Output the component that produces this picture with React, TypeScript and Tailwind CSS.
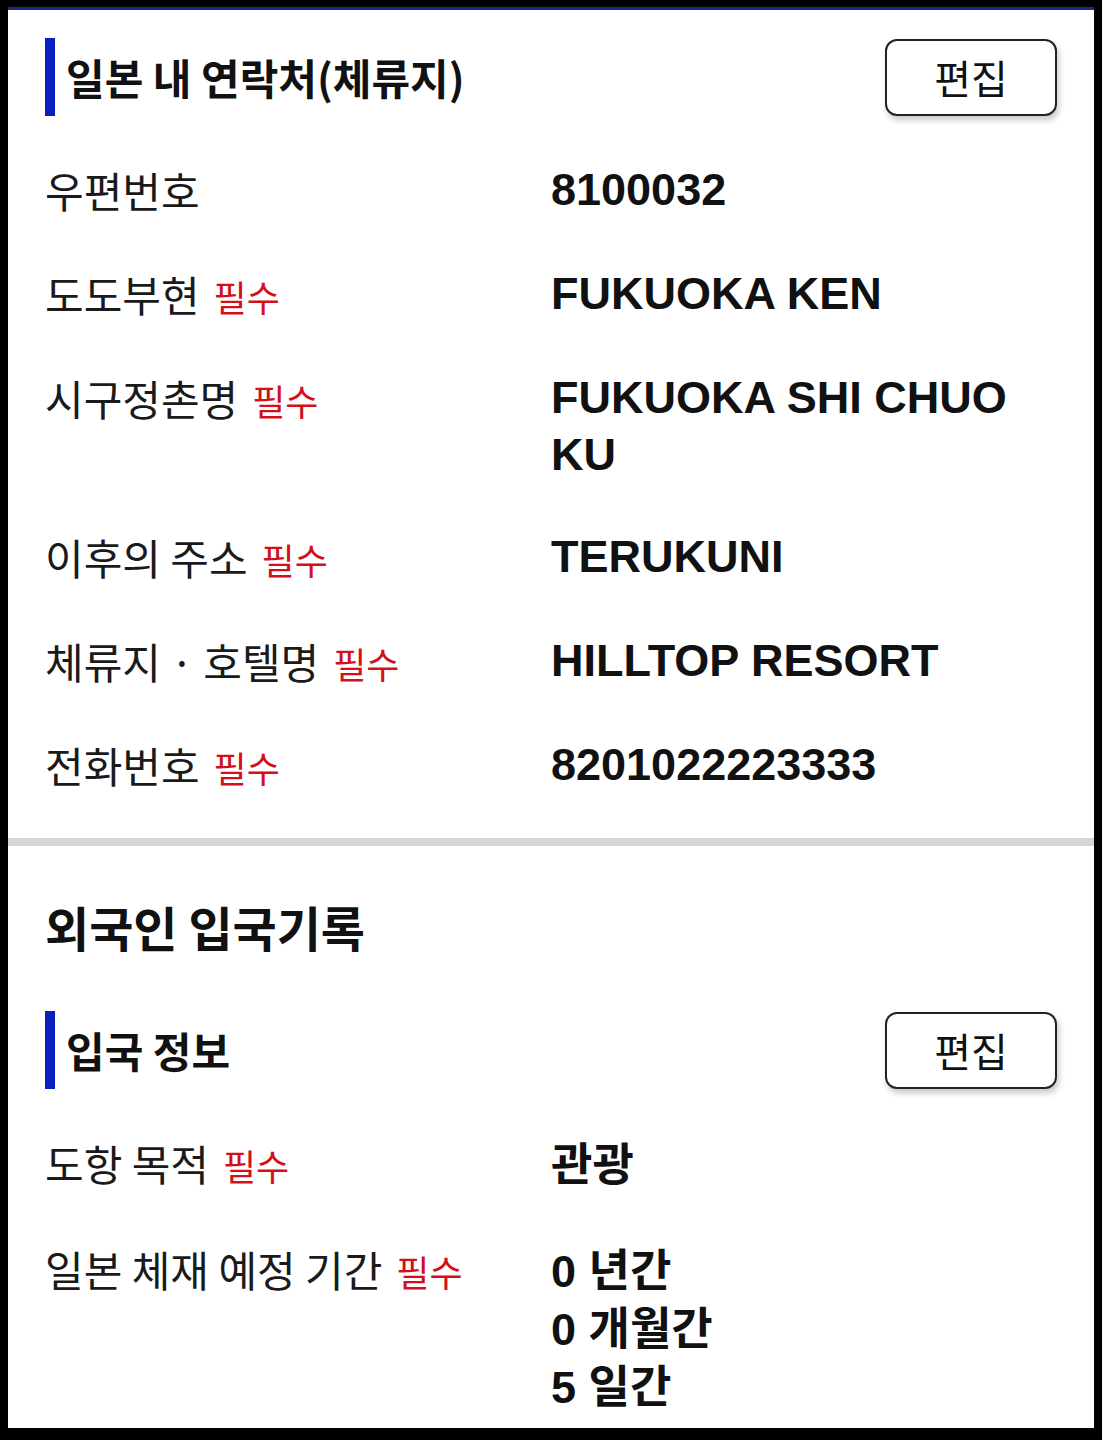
import React from 'react';

type Row = { label: string; required?: boolean; value: string[] };

const contactRows: Row[] = [
  { label: '우편번호', value: ['8100032'] },
  { label: '도도부현', required: true, value: ['FUKUOKA KEN'] },
  { label: '시구정촌명', required: true, value: ['FUKUOKA SHI CHUO KU'] },
  { label: '이후의 주소', required: true, value: ['TERUKUNI'] },
  { label: '체류지 · 호텔명', required: true, value: ['HILLTOP RESORT'] },
  { label: '전화번호', required: true, value: ['8201022223333'] },
];

const entryRows: Row[] = [
  { label: '도항 목적', required: true, value: ['관광'] },
  { label: '일본 체재 예정 기간', required: true, value: ['0 년간', '0 개월간', '5 일간'] },
];

const ko = { fontFamily: '"Noto Sans CJK KR", "Noto Sans", sans-serif' };
const latin = { fontFamily: '"Liberation Sans", "Noto Sans CJK KR", Arial, sans-serif' };

function SectionHeader({ title }: { title: string }) {
  return (
    <div className="flex h-[78px] items-center justify-between">
      <div className="flex h-full items-center">
        <div className="h-full w-[10px] bg-[#0a1fbf]" />
        <h2 className="ml-[11px] text-[42px] font-bold leading-none text-[#111]" style={ko}>
          {title}
        </h2>
      </div>
      <button
        className="flex h-[77px] w-[172px] items-center justify-center rounded-[12px] border-2 border-[#222] bg-white text-[40px] leading-none text-[#111] shadow-[2px_4px_6px_rgba(0,0,0,0.22)]"
        style={ko}
      >
        편집
      </button>
    </div>
  );
}

function InfoRow({ row, korean }: { row: Row; korean?: boolean }) {
  return (
    <div className="grid grid-cols-2 items-start pt-[44px]">
      <div className="h-[60px] text-[42px] leading-[60px] text-[#1a1a1a]" style={ko}>
        {row.label}
        {row.required && (
          <span className="ml-[14px] align-baseline text-[36px] leading-none text-[#d40f1a]">필수</span>
        )}
      </div>
      <div
        className={
          korean
            ? 'pt-[4px] text-[45px] font-bold leading-[58px] text-[#111]'
            : 'pt-[1px] text-[45px] font-bold leading-[57px] text-[#111]'
        }
        style={latin}
      >
        {row.value.map((v) => (
          <div key={v}>{v}</div>
        ))}
      </div>
    </div>
  );
}

export default function App() {
  return (
    <div className="h-[1440px] w-[1102px] bg-black px-[8px] pt-[7px]">
      <div className="h-[1421px] overflow-hidden border-t-[3px] border-[#1c2a8c] bg-white">
        {/* 일본 내 연락처 */}
        <section className="px-[37px] pb-[43px] pt-[28px]">
          <SectionHeader title="일본 내 연락처(체류지)" />
          {contactRows.map((r) => (
            <InfoRow key={r.label} row={r} />
          ))}
        </section>

        <div className="h-[8px] bg-[#d6d6d6]" />

        {/* 외국인 입국기록 */}
        <section className="px-[37px] pt-[50px]">
          <h1 className="mb-[55px] text-[48px] font-bold leading-[60px] text-[#111]" style={ko}>
            외국인 입국기록
          </h1>
          <SectionHeader title="입국 정보" />
          {entryRows.map((r) => (
            <InfoRow key={r.label} row={r} korean />
          ))}
        </section>
      </div>
    </div>
  );
}
